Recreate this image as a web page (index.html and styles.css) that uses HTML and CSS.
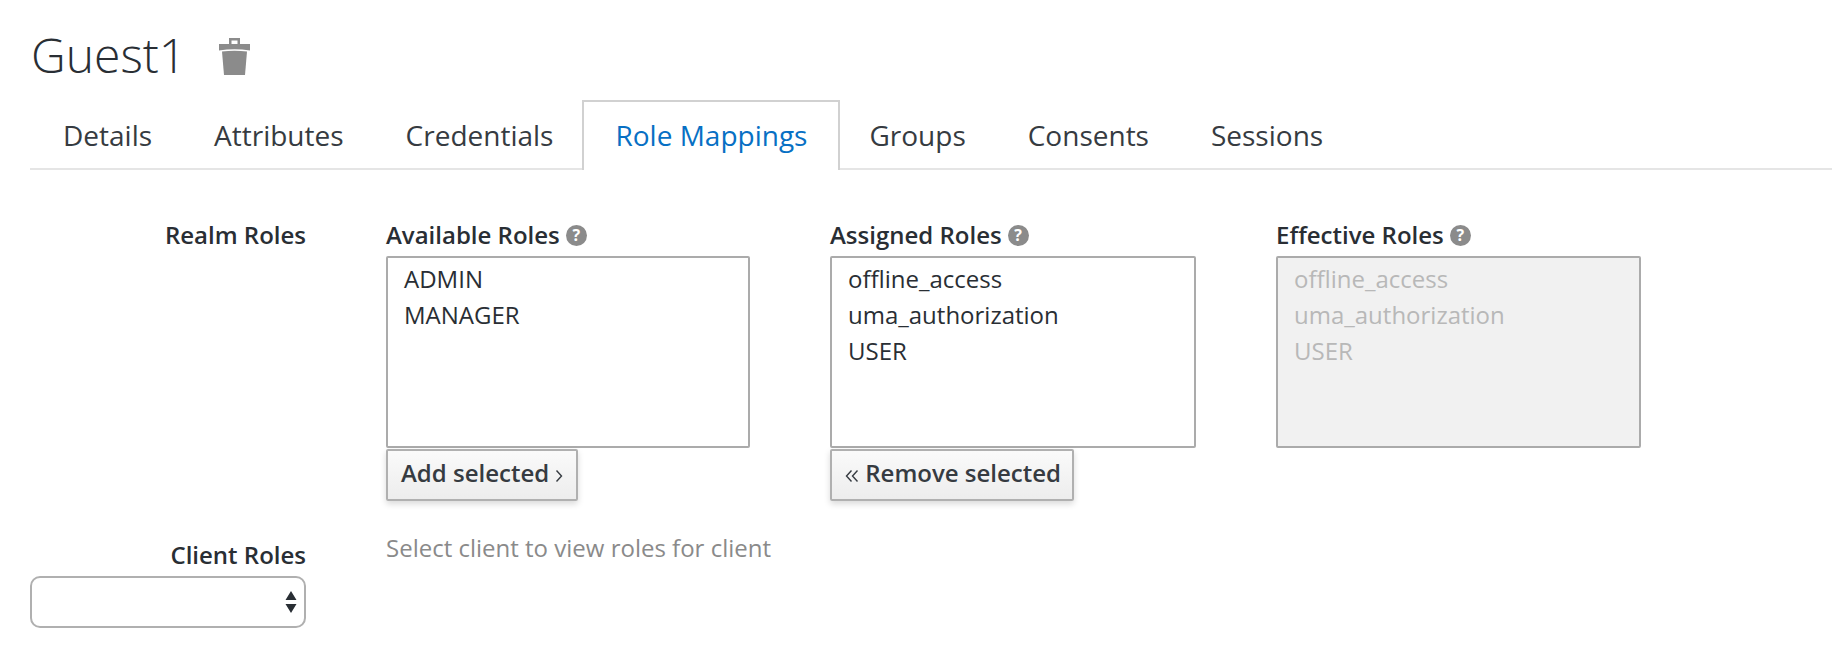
FILE: index.html
```html
<!DOCTYPE html>
<html lang="en">
<head>
  <meta charset="UTF-8" />
  <title>Guest1 - Role Mappings</title>
  <link rel="stylesheet" href="styles.css">
</head>
<body>
  <!-- header -->
  <header class="page-head">
    <h1>Guest1</h1>
    <svg class="trash" viewBox="0 0 31 37" aria-hidden="true">
      <path d="M10 0h11v6h10v6.500q-15.500-2.400-31 0V6h10zM12.500 2.500V6h6V2.500z" fill-rule="evenodd"/>
      <path d="M3 13.500q12.500-1.500 25 0L26 37H5z"/>
    </svg>
  </header>

  <!-- tabs -->
  <nav class="tabs">
    <a>Details</a>
    <a>Attributes</a>
    <a class="before-active">Credentials</a>
    <a class="active">Role Mappings</a>
    <a class="groups">Groups</a>
    <a class="consents">Consents</a>
    <a>Sessions</a>
  </nav>

  <!-- realm roles -->
  <section class="role-row">
    <div class="row-label">Realm Roles</div>
    <div class="col">
      <div class="col-title">Available Roles <span class="help">?</span></div>
      <div class="listbox">
        <div>ADMIN</div>
        <div>MANAGER</div>
      </div>
      <button class="move-btn">Add selected
        <svg class="arrow" viewBox="0 0 8 14" aria-hidden="true"><path d="M1.500 1.500L6.500 7l-5 5.500"/></svg>
      </button>
    </div>
    <div class="col">
      <div class="col-title">Assigned Roles <span class="help">?</span></div>
      <div class="listbox">
        <div>offline_access</div>
        <div>uma_authorization</div>
        <div>USER</div>
      </div>
      <button class="move-btn remove">
        <svg class="arrow wide" viewBox="0 0 14 14" aria-hidden="true"><path d="M6.500 1.500L1.500 7l5 5.500M12.500 1.500L7.500 7l5 5.500"/></svg>
        Remove selected
      </button>
    </div>
    <div class="col">
      <div class="col-title">Effective Roles <span class="help">?</span></div>
      <div class="listbox disabled">
        <div>offline_access</div>
        <div>uma_authorization</div>
        <div>USER</div>
      </div>
    </div>
  </section>

  <!-- client roles -->
  <section class="client-row">
    <div class="client-pick">
      <div class="row-label">Client Roles</div>
      <div class="fake-select">
        <svg viewBox="0 0 12 22" aria-hidden="true">
          <path d="M6 0l5.500 9H.5zM.5 13h11L6 22z"/>
        </svg>
      </div>
    </div>
    <div class="client-hint">Select client to view roles for client</div>
  </section>
</body>
</html>
```

FILE: styles.css
```css
*{margin:0;padding:0;box-sizing:border-box;}

body{
  background:#fff;
  color:#292e34;
  font-family:"Open Sans",Arial,sans-serif;
  font-size:24px;
  padding:0 0 0 30px;
  overflow:hidden;
}

/* header */
.page-head{
  display:flex;
  align-items:center;
  gap:33px;
  height:100px;
  padding:9px 0 0 1px;
}
h1{
  font-size:48px;
  font-weight:300;
  line-height:60px;
  color:#292e34;
}
.trash{
  width:31px;
  height:37px;
  margin-top:4px;
  fill:#8b8b8b;
}

/* tabs */
.tabs{
  display:flex;
  height:70px;
  border-bottom:2px solid #e5e5e5;
  padding-left:2px;
}
.tabs a{
  padding:17px 31px 0;
  font-size:28px;
  line-height:36px;
  color:#363b41;
  height:70px;
}
.tabs a.before-active{padding-right:29px;}
.tabs a.active{
  color:#0770c4;
  background:#fff;
  border:2px solid #d1d1d1;
  border-bottom:0;
  padding:15px 31px 0;
}
.tabs a.groups{padding-left:29px;padding-right:31px;}
.tabs a.consents{padding-right:31px;}

/* role rows */
.role-row{
  display:grid;
  grid-template-columns:276px 364px 366px 365px;
  column-gap:80px;
  padding-top:50px;
}
.row-label{
  font-size:24px;
  font-weight:600;
  line-height:30px;
  text-align:right;
  color:#292e34;
}
.col-title{
  font-size:24px;
  font-weight:600;
  line-height:30px;
  display:flex;
  align-items:center;
  gap:6px;
  margin-bottom:6px;
}
.help{
  display:inline-flex;
  align-items:center;
  justify-content:center;
  width:21px;
  height:21px;
  border-radius:50%;
  background:#8b8b8b;
  color:#fff;
  font-size:16px;
  font-weight:700;
  line-height:1;
}
.listbox{
  height:192px;
  border:2px solid #ababab;
  border-radius:2px;
  padding:3px 16px;
  font-size:24px;
  line-height:36px;
  color:#292e34;
  background:#fff;
}
.listbox.disabled{
  background:#f1f1f1;
  color:#b8b8b8;
}
.move-btn{
  display:block;
  margin-top:1px;
  height:52px;
  padding:0 13px 6px;
  border:2px solid #b0b0b0;
  border-radius:2px;
  background:linear-gradient(#fafafa,#ededed);
  box-shadow:0 3px 6px rgba(0,0,0,.15);
  font-family:"Open Sans",Arial,sans-serif;
  font-size:24px;
  font-weight:600;
  color:#363b41;
}
.move-btn.remove{padding-right:11px;}
.arrow{
  width:8px;
  height:14px;
  fill:none;
  stroke:#363b41;
  stroke-width:1.400;
  vertical-align:-1px;
}
.arrow.wide{width:14px;}

/* client roles */
.client-row{
  display:flex;
  gap:80px;
  padding-top:39px;
}
.client-pick{width:276px;}
.fake-select{
  height:52px;
  margin-top:6px;
  border:2px solid #b0b0b0;
  border-radius:10px;
  display:flex;
  align-items:center;
  justify-content:flex-end;
  padding-right:7px;
}
.fake-select svg{
  width:12px;
  height:22px;
  fill:#292e34;
}
.client-hint{
  font-size:24px;
  line-height:30px;
  color:#8a8a8a;
  margin-top:-7px;
}
```
